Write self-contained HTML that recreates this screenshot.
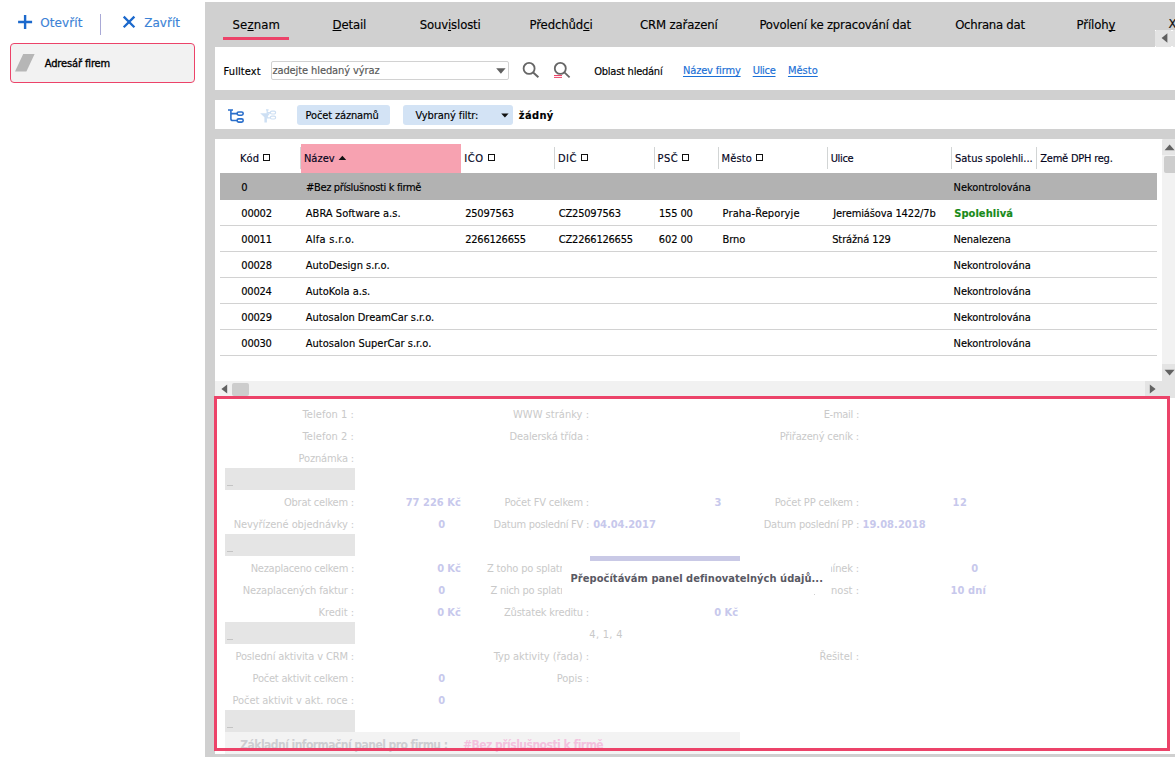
<!DOCTYPE html>
<html lang="cs"><head><meta charset="utf-8"><title>Adresář firem</title>
<style>
html,body{margin:0;padding:0}
body{width:1175px;height:757px;position:relative;overflow:hidden;background:#fff;font-family:'DejaVu Sans Condensed','Liberation Sans',sans-serif;font-size:11px;color:#000}
.t{position:absolute;white-space:nowrap;-webkit-text-stroke:0.15px}
.f{-webkit-text-stroke:0}
.a{position:absolute}
u{text-decoration:underline;text-underline-offset:1px;text-decoration-skip-ink:none}
.sep{position:absolute;width:1px;top:147px;height:22px;background:#d2d5d5}
.sq{position:absolute;top:154px;width:5px;height:5px;border:1px solid #111}
.rl{position:absolute;left:220px;width:937px;height:1px;background:#d2d2d2}
.bar{position:absolute;left:225px;width:130px;height:22px;background:#e5e5e5}
.bar i{position:absolute;left:2px;top:17px;width:6px;height:1px;background:#c4c4c4}
</style></head>
<body>
<div class="a" style="left:0;top:0;width:205px;height:757px;background:#fff">
<svg class="a" style="left:16px;top:14px" width="18" height="18" viewBox="0 0 18 18"><path d="M9.1 1v14M2.1 8h14" stroke="#1c69cc" stroke-width="2.4" fill="none"/></svg>
<div class="a" style="left:100px;top:14px;width:1px;height:21px;background:#a9a9d6"></div>
<svg class="a" style="left:121px;top:14px" width="18" height="18" viewBox="0 0 18 18"><path d="M2.7 2.6l10.7 10.7M13.4 2.6L2.7 13.3" stroke="#1c69cc" stroke-width="2.3" fill="none"/></svg>
<div class="a" style="left:10px;top:43px;width:183px;height:38px;border:1px solid #ec4369;border-radius:4px;background:#f2f2f2"></div>
<svg class="a" style="left:15px;top:54px" width="20" height="18" viewBox="0 0 20 18"><path d="M8.2 0H19.6L11.4 17.6H0z" fill="#b6b6b6"/></svg>
</div>
<div class="a" style="left:205px;top:2px;width:970px;height:755px;background:#d0d0d0"></div>
<div class="a" style="left:223px;top:37px;width:66px;height:3px;background:#ec4369"></div>
<span class="t" style="left:1168.6px;top:15px;font-size:13px;line-height:17px;color:#141414">X</span>
<div class="a" style="left:1155px;top:30px;width:20px;height:17px;background:#e4e4e4"><svg class="a" style="left:6px;top:3px" width="7" height="10" viewBox="0 0 7 10"><path d="M6.4 0.2v9.6L0.6 5z" fill="#606060"/></svg><i class="a" style="left:0px;top:0px;width:1px;height:1px;background:#fff"></i><i class="a" style="left:0px;top:16px;width:1px;height:1px;background:#fff"></i><i class="a" style="left:16px;top:0px;width:1px;height:1px;background:#fff"></i><i class="a" style="left:16px;top:16px;width:1px;height:1px;background:#fff"></i><i class="a" style="left:17px;top:0px;width:1px;height:1px;background:#fff"></i><i class="a" style="left:17px;top:16px;width:1px;height:1px;background:#fff"></i></div>
<div class="a" style="left:215px;top:47px;width:960px;height:43px;background:#fff"></div>
<div class="a" style="left:271px;top:61px;width:236px;height:17px;border:1px solid #d2d2d2;border-radius:2px;background:#fff"></div>
<svg class="a" style="left:496px;top:68px" width="10" height="6" viewBox="0 0 10 6"><path d="M0.2 0.3h9.4L4.9 5.8z" fill="#606060"/></svg>
<svg class="a" style="left:520px;top:58px" width="22" height="22" viewBox="0 0 22 22"><circle cx="9.1" cy="10.4" r="5.5" fill="none" stroke="#666" stroke-width="1.8"/><path d="M13.2 14.4l5.2 4.9" stroke="#666" stroke-width="2" fill="none"/></svg>
<svg class="a" style="left:551px;top:58px" width="22" height="22" viewBox="0 0 22 22"><circle cx="9.3" cy="10.4" r="5.5" fill="none" stroke="#666" stroke-width="1.8"/><path d="M13.4 14.4l5.2 4.9" stroke="#666" stroke-width="1.8" fill="none"/><path d="M3 17.5h8M3 19.4h8" stroke="#ec4369" stroke-width="1"/></svg>
<div class="a" style="left:215px;top:100px;width:960px;height:29px;background:#fff"></div>
<svg class="a" style="left:227px;top:108px" width="18" height="16" viewBox="0 0 18 16"><g fill="none" stroke="#2a6fcb" stroke-width="1.6"><path d="M1 2h5M3.9 2v8.7q0 1.8 1.8 1.8h4.4M3.9 5.6h6.2"/><rect x="10.1" y="4" width="6.1" height="3.2" rx="1.6"/><rect x="10.1" y="10.9" width="6.1" height="3.2" rx="1.6"/></g></svg>
<svg class="a" style="left:259px;top:108px" width="18" height="16" viewBox="0 0 18 16"><g fill="none" stroke="#cddff3" stroke-width="1.2"><path d="M7 1.8h2.6M8.2 1.8v8h3M8.2 4.6h3"/><rect x="11.4" y="3.1" width="5.2" height="2.9" rx="1.45"/><rect x="11.4" y="8.1" width="5.2" height="2.9" rx="1.45"/></g><path d="M1.2 5.2h10L7.9 9.2v5.4H5.4V9.2z" fill="#cddff3"/></svg>
<div class="a" style="left:297px;top:105px;width:93px;height:20px;border-radius:3px;background:#d3e3f5"></div>
<div class="a" style="left:403px;top:105px;width:110px;height:20px;border-radius:3px;background:#d3e3f5"></div>
<svg class="a" style="left:501px;top:113px" width="8" height="5" viewBox="0 0 8 5"><path d="M0.2 0.4h7.4L3.9 4.4z" fill="#111"/></svg>
<div class="a" style="left:215px;top:139px;width:960px;height:257px;background:#fff"></div>
<div class="a" style="left:301px;top:144px;width:160px;height:29px;background:#f7a2b1"></div>
<i class="sep" style="left:300px"></i>
<i class="sep" style="left:554px"></i>
<i class="sep" style="left:654px"></i>
<i class="sep" style="left:718px"></i>
<i class="sep" style="left:827px"></i>
<i class="sep" style="left:951px"></i>
<i class="sep" style="left:1036px"></i>
<i class="sq" style="left:263px"></i>
<i class="sq" style="left:488px"></i>
<i class="sq" style="left:581px"></i>
<i class="sq" style="left:682px"></i>
<i class="sq" style="left:756px"></i>
<svg class="a" style="left:338px;top:155px" width="9" height="6" viewBox="0 0 9 6"><path d="M4.4 0.8L8.2 5H0.6z" fill="#111"/></svg>
<div class="a" style="left:220px;top:173px;width:937px;height:27px;background:#b2b2b2"></div>
<i class="rl" style="top:225px"></i>
<i class="rl" style="top:251px"></i>
<i class="rl" style="top:277px"></i>
<i class="rl" style="top:303px"></i>
<i class="rl" style="top:329px"></i>
<i class="rl" style="top:355px"></i>
<div class="a" style="left:1162px;top:139px;width:13px;height:242px;background:#f2f2f2"></div>
<div class="a" style="left:1162px;top:139px;width:13px;height:16px;background:#e6e6e6;border-top-left-radius:2px"></div>
<svg class="a" style="left:1164px;top:144px" width="11" height="7" viewBox="0 0 11 7"><path d="M5.6 0.6L10.6 6.2H0.6z" fill="#626262"/></svg>
<div class="a" style="left:1164px;top:156px;width:15px;height:17px;border-radius:2px;background:#cdcdcd"></div>
<div class="a" style="left:1162px;top:364px;width:13px;height:34px;background:#e4e4e4"></div>
<svg class="a" style="left:1164px;top:369px" width="11" height="7" viewBox="0 0 11 7"><path d="M0.6 0.8h10L5.6 6.4z" fill="#626262"/></svg>
<div class="a" style="left:215px;top:381px;width:947px;height:15px;background:#f1f1f1"></div>
<svg class="a" style="left:221px;top:384px" width="7" height="10" viewBox="0 0 7 10"><path d="M6.2 0.4v9.2L0.4 5z" fill="#626262"/></svg>
<div class="a" style="left:232px;top:383px;width:17px;height:13px;border-radius:2px;background:#cdcdcd"></div>
<div class="a" style="left:1145px;top:381px;width:17px;height:15px;background:#e4e4e4"></div>
<svg class="a" style="left:1149px;top:384px" width="7" height="10" viewBox="0 0 7 10"><path d="M0.8 0.4v9.2L6.6 5z" fill="#626262"/></svg>
<div class="a" style="left:215px;top:398px;width:960px;height:356px;background:#fff"></div>
<div class="bar" style="top:468px"><i></i></div>
<div class="bar" style="top:534px"><i></i></div>
<div class="bar" style="top:622px"><i></i></div>
<div class="bar" style="top:710px"><i></i></div>
<div class="a" style="left:225px;top:732px;width:515px;height:22px;background:#f3f3f3"></div>
<span class="t" style="font-size:12px;line-height:16px;color:#3b82d6;font-family:'DejaVu Sans','Liberation Sans',sans-serif;letter-spacing:0.13px;left:40.14px;top:15px;">Otevřít</span>
<span class="t" style="font-size:12px;line-height:16px;color:#3b82d6;font-family:'DejaVu Sans','Liberation Sans',sans-serif;letter-spacing:0.03px;left:144.19px;top:15px;">Zavřít</span>
<span class="t" style="font-size:11px;line-height:15px;letter-spacing:-0.13px;left:44.78px;top:56px;-webkit-text-stroke:0.35px #000;">Adresář firem</span>
<span class="t" style="font-size:13px;line-height:17px;letter-spacing:0.10px;left:232.59px;top:16px;">Se<u>z</u>nam</span>
<span class="t" style="font-size:13px;line-height:17px;letter-spacing:-0.12px;left:332.53px;top:16px;"><u>D</u>etail</span>
<span class="t" style="font-size:13px;line-height:17px;letter-spacing:-0.15px;left:419.66px;top:16px;">Souv<u>i</u>slosti</span>
<span class="t" style="font-size:13px;line-height:17px;letter-spacing:-0.12px;left:529.47px;top:16px;">Předchůd<u>c</u>i</span>
<span class="t" style="font-size:13px;line-height:17px;letter-spacing:-0.16px;left:640.12px;top:16px;">CRM zařazení</span>
<span class="t" style="font-size:13px;line-height:17px;letter-spacing:-0.20px;left:759.47px;top:16px;">Povolení ke zpracování dat</span>
<span class="t" style="font-size:13px;line-height:17px;letter-spacing:-0.26px;left:955.14px;top:16px;">Ochrana dat</span>
<span class="t" style="font-size:13px;line-height:17px;letter-spacing:-0.11px;left:1076.47px;top:16px;">Příloh<u>y</u></span>
<span class="t" style="font-size:11px;line-height:15px;letter-spacing:0.09px;left:223.60px;top:64px;">Fulltext</span>
<span class="t" style="font-size:11px;line-height:15px;color:#585858;letter-spacing:-0.10px;left:272.38px;top:63px;">zadejte hledaný výraz</span>
<span class="t" style="font-size:11px;line-height:15px;letter-spacing:-0.24px;left:594.23px;top:64px;">Oblast hledání</span>
<span class="t" style="font-size:11px;line-height:15px;color:#1a6fd6;letter-spacing:-0.16px;left:682.99px;top:63px;text-decoration:underline;text-underline-offset:2px;">Název firmy</span>
<span class="t" style="font-size:11px;line-height:15px;color:#1a6fd6;letter-spacing:-0.29px;left:752.70px;top:63px;text-decoration:underline;text-underline-offset:2px;">Ulice</span>
<span class="t" style="font-size:11px;line-height:15px;color:#1a6fd6;letter-spacing:0.01px;left:787.98px;top:63px;text-decoration:underline;text-underline-offset:2px;">Město</span>
<span class="t" style="font-size:11px;line-height:15px;letter-spacing:-0.14px;left:305.60px;top:108px;">Počet záznamů</span>
<span class="t" style="font-size:11px;line-height:15px;letter-spacing:-0.08px;left:415.40px;top:108px;">Vybraný filtr:</span>
<span class="t" style="font-size:11px;line-height:15px;font-weight:700;letter-spacing:0.38px;left:518.77px;top:108px;">žádný</span>
<span class="t" style="font-size:11px;line-height:15px;color:#04041c;letter-spacing:0.40px;left:240.08px;top:151px;">Kód</span>
<span class="t" style="font-size:11px;line-height:15px;color:#04041c;letter-spacing:0.02px;left:303.95px;top:151px;">Název</span>
<span class="t" style="font-size:11px;line-height:15px;color:#04041c;letter-spacing:0.50px;left:464.37px;top:151px;">IČO</span>
<span class="t" style="font-size:11px;line-height:15px;color:#04041c;letter-spacing:0.50px;left:557.98px;top:151px;">DIČ</span>
<span class="t" style="font-size:11px;line-height:15px;color:#04041c;letter-spacing:0.44px;left:657.60px;top:151px;">PSČ</span>
<span class="t" style="font-size:11px;line-height:15px;color:#04041c;letter-spacing:0.11px;left:721.55px;top:151px;">Město</span>
<span class="t" style="font-size:11px;line-height:15px;color:#04041c;letter-spacing:-0.32px;left:830.70px;top:151px;">Ulice</span>
<span class="t" style="font-size:11px;line-height:15px;color:#04041c;letter-spacing:-0.05px;left:955.09px;top:151px;">Satus spolehli...</span>
<span class="t" style="font-size:11px;line-height:15px;color:#04041c;letter-spacing:-0.23px;left:1040.31px;top:151px;">Země DPH reg.</span>
<span class="t" style="font-size:11px;line-height:15px;letter-spacing:0.00px;left:241.37px;top:180px;">0</span>
<span class="t" style="font-size:11px;line-height:15px;letter-spacing:-0.21px;left:241.37px;top:206px;">00002</span>
<span class="t" style="font-size:11px;line-height:15px;letter-spacing:-0.21px;left:241.37px;top:232px;">00011</span>
<span class="t" style="font-size:11px;line-height:15px;letter-spacing:-0.22px;left:241.37px;top:258px;">00028</span>
<span class="t" style="font-size:11px;line-height:15px;letter-spacing:-0.28px;left:241.37px;top:284px;">00024</span>
<span class="t" style="font-size:11px;line-height:15px;letter-spacing:-0.22px;left:241.37px;top:310px;">00029</span>
<span class="t" style="font-size:11px;line-height:15px;letter-spacing:-0.23px;left:241.37px;top:336px;">00030</span>
<span class="t" style="font-size:11px;line-height:15px;letter-spacing:-0.36px;left:306.09px;top:180px;">#Bez příslušnosti k firmě</span>
<span class="t" style="font-size:11px;line-height:15px;letter-spacing:0.04px;left:305.78px;top:206px;">ABRA Software a.s.</span>
<span class="t" style="font-size:11px;line-height:15px;letter-spacing:0.27px;left:305.78px;top:232px;">Alfa s.r.o.</span>
<span class="t" style="font-size:11px;line-height:15px;letter-spacing:0.00px;left:305.78px;top:258px;">AutoDesign s.r.o.</span>
<span class="t" style="font-size:11px;line-height:15px;letter-spacing:0.00px;left:305.78px;top:284px;">AutoKola a.s.</span>
<span class="t" style="font-size:11px;line-height:15px;letter-spacing:-0.04px;left:305.78px;top:310px;">Autosalon DreamCar s.r.o.</span>
<span class="t" style="font-size:11px;line-height:15px;letter-spacing:0.02px;left:305.78px;top:336px;">Autosalon SuperCar s.r.o.</span>
<span class="t" style="font-size:11px;line-height:15px;letter-spacing:-0.22px;left:465.23px;top:206px;">25097563</span>
<span class="t" style="font-size:11px;line-height:15px;letter-spacing:-0.23px;left:465.23px;top:232px;">2266126655</span>
<span class="t" style="font-size:11px;line-height:15px;letter-spacing:-0.21px;left:558.85px;top:206px;">CZ25097563</span>
<span class="t" style="font-size:11px;line-height:15px;letter-spacing:-0.22px;left:558.85px;top:232px;">CZ2266126655</span>
<span class="t" style="font-size:11px;line-height:15px;letter-spacing:-0.14px;left:658.98px;top:206px;">155 00</span>
<span class="t" style="font-size:11px;line-height:15px;letter-spacing:-0.09px;left:658.72px;top:232px;">602 00</span>
<span class="t" style="font-size:11px;line-height:15px;letter-spacing:0.12px;left:722.60px;top:206px;">Praha-Řeporyje</span>
<span class="t" style="font-size:11px;line-height:15px;letter-spacing:-0.12px;left:722.60px;top:232px;">Brno</span>
<span class="t" style="font-size:11px;line-height:15px;letter-spacing:-0.13px;left:833.30px;top:206px;">Jeremiášova 1422/7b</span>
<span class="t" style="font-size:11px;line-height:15px;letter-spacing:-0.12px;left:832.21px;top:232px;">Strážná 129</span>
<span class="t" style="font-size:11px;line-height:15px;letter-spacing:-0.06px;left:953.56px;top:180px;">Nekontrolována</span>
<span class="t" style="font-size:11px;line-height:15px;font-weight:700;color:#188a18;letter-spacing:0.07px;left:954.20px;top:206px;">Spolehlivá</span>
<span class="t" style="font-size:11px;line-height:15px;letter-spacing:-0.11px;left:953.56px;top:232px;">Nenalezena</span>
<span class="t" style="font-size:11px;line-height:15px;letter-spacing:-0.06px;left:953.56px;top:258px;">Nekontrolována</span>
<span class="t" style="font-size:11px;line-height:15px;letter-spacing:-0.06px;left:953.56px;top:284px;">Nekontrolována</span>
<span class="t" style="font-size:11px;line-height:15px;letter-spacing:-0.06px;left:953.56px;top:310px;">Nekontrolována</span>
<span class="t" style="font-size:11px;line-height:15px;letter-spacing:-0.06px;left:953.56px;top:336px;">Nekontrolována</span>
<span class="t f" style="font-size:11px;line-height:15px;color:#c9c9c9;letter-spacing:0.05px;right:821.0px;top:407px;">Telefon 1 :</span>
<span class="t f" style="font-size:11px;line-height:15px;color:#c9c9c9;letter-spacing:0.05px;right:821.0px;top:429px;">Telefon 2 :</span>
<span class="t f" style="font-size:11px;line-height:15px;color:#c9c9c9;letter-spacing:-0.15px;right:821.0px;top:451px;">Poznámka :</span>
<span class="t f" style="font-size:11px;line-height:15px;color:#c9c9c9;letter-spacing:-0.21px;right:821.0px;top:495px;">Obrat celkem :</span>
<span class="t f" style="font-size:11px;line-height:15px;color:#c9c9c9;letter-spacing:-0.08px;right:821.0px;top:517px;">Nevyřízené objednávky :</span>
<span class="t f" style="font-size:11px;line-height:15px;color:#c9c9c9;letter-spacing:-0.27px;right:821.0px;top:561px;">Nezaplaceno celkem :</span>
<span class="t f" style="font-size:11px;line-height:15px;color:#c9c9c9;letter-spacing:-0.14px;right:821.0px;top:583px;">Nezaplacených faktur :</span>
<span class="t f" style="font-size:11px;line-height:15px;color:#c9c9c9;letter-spacing:-0.05px;right:821.0px;top:605px;">Kredit :</span>
<span class="t f" style="font-size:11px;line-height:15px;color:#c9c9c9;letter-spacing:-0.14px;right:821.0px;top:649px;">Poslední aktivita v CRM :</span>
<span class="t f" style="font-size:11px;line-height:15px;color:#c9c9c9;letter-spacing:-0.21px;right:821.0px;top:671px;">Počet aktivit celkem :</span>
<span class="t f" style="font-size:11px;line-height:15px;color:#c9c9c9;letter-spacing:-0.06px;right:821.0px;top:693px;">Počet aktivit v akt. roce :</span>
<span class="t f" style="font-size:11px;line-height:15px;color:#c9c9c9;letter-spacing:0.03px;right:586.0px;top:407px;">WWW stránky :</span>
<span class="t f" style="font-size:11px;line-height:15px;color:#c9c9c9;letter-spacing:-0.16px;right:586.0px;top:429px;">Dealerská třída :</span>
<span class="t f" style="font-size:11px;line-height:15px;color:#c9c9c9;letter-spacing:-0.19px;right:586.0px;top:495px;">Počet FV celkem :</span>
<span class="t f" style="font-size:11px;line-height:15px;color:#c9c9c9;letter-spacing:-0.26px;right:586.0px;top:517px;">Datum poslední FV :</span>
<span class="t f" style="font-size:11px;line-height:15px;color:#c9c9c9;letter-spacing:-0.16px;right:586.0px;top:561px;">Z toho po splatnosti :</span>
<span class="t f" style="font-size:11px;line-height:15px;color:#c9c9c9;letter-spacing:-0.25px;right:586.0px;top:583px;">Z nich po splatnosti :</span>
<span class="t f" style="font-size:11px;line-height:15px;color:#c9c9c9;letter-spacing:-0.18px;right:586.0px;top:605px;">Zůstatek kreditu :</span>
<span class="t f" style="font-size:11px;line-height:15px;color:#c9c9c9;letter-spacing:-0.04px;right:586.0px;top:649px;">Typ aktivity (řada) :</span>
<span class="t f" style="font-size:11px;line-height:15px;color:#c9c9c9;letter-spacing:0.01px;right:586.0px;top:671px;">Popis :</span>
<span class="t f" style="font-size:11px;line-height:15px;color:#c9c9c9;letter-spacing:-0.27px;right:316.0px;top:407px;">E-mail :</span>
<span class="t f" style="font-size:11px;line-height:15px;color:#c9c9c9;letter-spacing:-0.16px;right:316.0px;top:429px;">Přiřazený ceník :</span>
<span class="t f" style="font-size:11px;line-height:15px;color:#c9c9c9;letter-spacing:-0.16px;right:316.0px;top:495px;">Počet PP celkem :</span>
<span class="t f" style="font-size:11px;line-height:15px;color:#c9c9c9;letter-spacing:-0.24px;right:316.0px;top:517px;">Datum poslední PP :</span>
<span class="t f" style="font-size:11px;line-height:15px;color:#c9c9c9;letter-spacing:-0.01px;right:316.0px;top:649px;">Řešitel :</span>
<span class="t f" style="font-size:11px;line-height:15px;color:#c9c9c9;right:316.0px;top:561px;letter-spacing:-0.15px;">Počet upomínek :</span>
<span class="t f" style="font-size:11px;line-height:15px;color:#c9c9c9;right:316.0px;top:583px;letter-spacing:0.02px;">Splatnost :</span>
<span class="t f" style="font-size:11px;line-height:15px;font-weight:700;color:#c7c8ec;letter-spacing:0.03px;left:405.67px;top:495px;">77 226 Kč</span>
<span class="t f" style="font-size:11px;line-height:15px;font-weight:700;color:#c7c8ec;letter-spacing:0.00px;left:438.16px;top:517px;">0</span>
<span class="t f" style="font-size:11px;line-height:15px;font-weight:700;color:#c7c8ec;letter-spacing:-0.09px;left:437.16px;top:561px;">0 Kč</span>
<span class="t f" style="font-size:11px;line-height:15px;font-weight:700;color:#c7c8ec;letter-spacing:0.00px;left:438.16px;top:583px;">0</span>
<span class="t f" style="font-size:11px;line-height:15px;font-weight:700;color:#c7c8ec;letter-spacing:-0.09px;left:437.16px;top:605px;">0 Kč</span>
<span class="t f" style="font-size:11px;line-height:15px;font-weight:700;color:#c7c8ec;letter-spacing:0.00px;left:438.16px;top:671px;">0</span>
<span class="t f" style="font-size:11px;line-height:15px;font-weight:700;color:#c7c8ec;letter-spacing:0.00px;left:438.16px;top:693px;">0</span>
<span class="t f" style="font-size:11px;line-height:15px;font-weight:700;color:#c7c8ec;letter-spacing:0.00px;left:714.52px;top:495px;">3</span>
<span class="t f" style="font-size:11px;line-height:15px;font-weight:700;color:#c7c8ec;letter-spacing:-0.00px;left:593.16px;top:517px;">04.04.2017</span>
<span class="t f" style="font-size:11px;line-height:15px;font-weight:700;color:#c7c8ec;letter-spacing:0.05px;left:714.16px;top:605px;">0 Kč</span>
<span class="t f" style="font-size:11px;line-height:15px;font-weight:700;color:#c7c8ec;letter-spacing:0.50px;left:952.52px;top:495px;">12</span>
<span class="t f" style="font-size:11px;line-height:15px;font-weight:700;color:#c7c8ec;letter-spacing:0.07px;left:862.43px;top:517px;">19.08.2018</span>
<span class="t f" style="font-size:11px;line-height:15px;font-weight:700;color:#c7c8ec;letter-spacing:0.00px;left:971.16px;top:561px;">0</span>
<span class="t f" style="font-size:11px;line-height:15px;font-weight:700;color:#c7c8ec;letter-spacing:0.15px;left:950.43px;top:583px;">10 dní</span>
<span class="t f" style="font-size:11px;line-height:15px;color:#c9c9c9;letter-spacing:0.29px;left:589.33px;top:627px;">4, 1, 4</span>
<span class="t f" style="font-size:12px;line-height:16px;font-weight:700;color:#cdcdd1;letter-spacing:-0.55px;left:240.33px;top:737px;">Základní informační panel pro firmu :</span>
<span class="t f" style="font-size:12px;line-height:16px;font-weight:700;color:#f3c1de;letter-spacing:-0.51px;left:462.95px;top:737px;">#Bez příslušnosti k firmě</span>
<div class="a" style="left:562px;top:551px;width:269px;height:46px;background:#fff"></div>
<div class="a" style="left:590px;top:556px;width:150px;height:5px;background:#c9c9e6"></div>
<span class="t f" style="font-size:11px;line-height:15px;font-weight:700;color:#595963;letter-spacing:0.05px;left:570.53px;top:571px;">Přepočítávám panel definovatelných údajů...</span>
<i class="a" style="left:814px;top:594px;width:1px;height:1px;background:#cfcfcf"></i>
<div class="a" style="left:214px;top:396px;width:950px;height:349px;border:3px solid #ec4369"></div>
</body></html>
